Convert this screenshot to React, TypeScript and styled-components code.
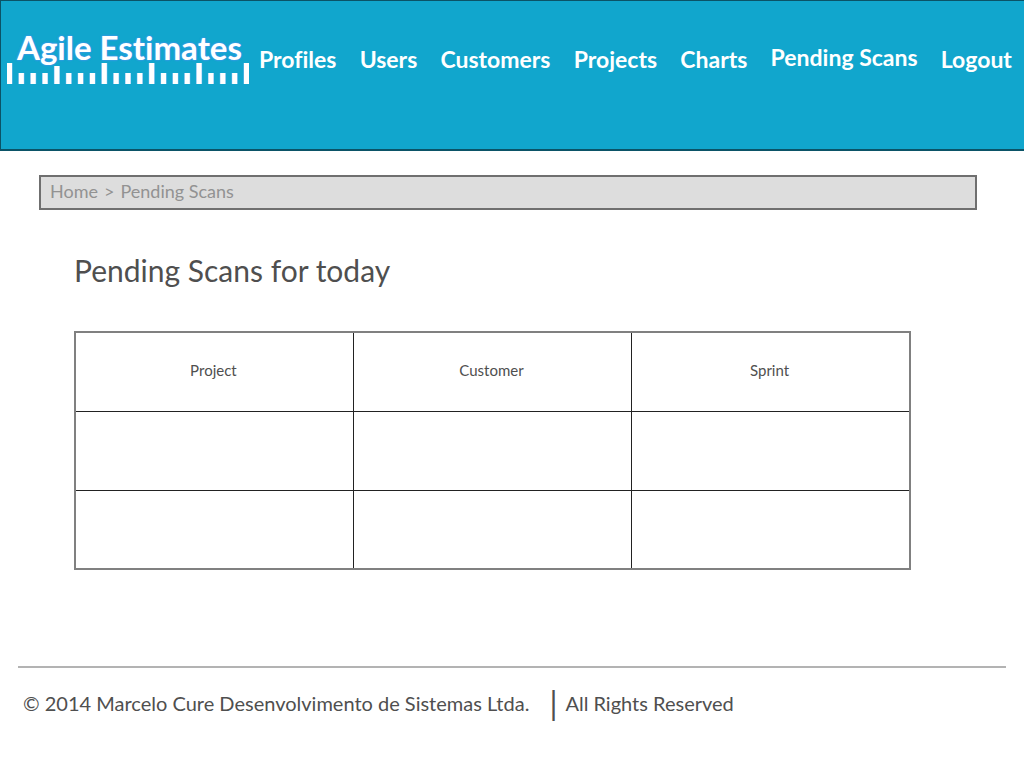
import React from "react";
import styled, { createGlobalStyle } from "styled-components";

const GlobalStyle = createGlobalStyle`
  * { box-sizing: border-box; }
  body {
    margin: 0;
    background: #ffffff;
    color: #4f4f4f;
    font-family: Lato, "Liberation Sans", sans-serif;
    font-variant-ligatures: none;
  }
`;

const Header = styled.header`
  display: flex;
  align-items: flex-start;
  gap: 10px;
  min-height: 151px;
  padding: 28px 12px 0 6px;
  background: #11a6cd;
  border: solid #0b5367;
  border-width: 1px 0 2px 1px;
`;

const Logo = styled.a`
  flex: none;
  display: flex;
  flex-direction: column;
  width: 242px;
  color: #ffffff;
  text-decoration: none;
`;

const Wordmark = styled.span`
  padding: 2px 0 0 10px;
  font-size: 33px;
  font-weight: 700;
  line-height: 32px;
  white-space: nowrap;
  text-shadow: 0 0 2px #4a94f0, 0 0 2px #4a94f0;
`;

const Nav = styled.nav`
  flex: 1;
  display: flex;
  justify-content: space-between;
  padding-top: 15px;
`;

const NavLink = styled.a<{ $current?: boolean }>`
  margin-top: ${(p) => (p.$current ? "-2px" : "0")};
  color: #ffffff;
  font-size: 23px;
  font-weight: 700;
  line-height: 30px;
  text-decoration: none;
  white-space: nowrap;
`;

const Breadcrumb = styled.nav`
  display: flex;
  gap: 6px;
  margin: 24px 47px 0 39px;
  padding: 0 9px 2px;
  border: 2px solid #6f6f6f;
  background: #dddddd;
  color: #929292;
  font-size: 18px;
  line-height: 29px;
`;

const Crumb = styled.a`
  color: inherit;
  text-decoration: none;
`;

const Main = styled.main`
  padding: 40px 113px 0 74px;
`;

const Title = styled.h1`
  margin: 0 0 41px;
  font-size: 30px;
  font-weight: 400;
  line-height: 40px;
`;

const ScanTable = styled.table`
  width: 100%;
  table-layout: fixed;
  border-collapse: collapse;
  border: 2px solid #808080;
`;

const cell = `
  height: 79px;
  padding: 0 2px 4px 0;
  border: 1px solid #222222;
`;

const HeadCell = styled.th`
  ${cell}
  font-size: 15px;
  font-weight: 400;
`;

const Cell = styled.td`
  ${cell}
`;

const Footer = styled.footer`
  margin: 96px 18px 0;
  padding: 17px 5px 24px;
  border-top: 2px solid #b3b3b3;
  font-size: 20px;
  line-height: 36px;
`;

const FooterText = styled.p`
  display: flex;
  align-items: center;
  gap: 8px;
  margin: 0;
`;

const Bar = styled.span`
  padding-left: 12px;
  font-size: 32px;
`;

const links = ["Profiles", "Users", "Customers", "Projects", "Charts", "Pending Scans", "Logout"];
const columns = ["Project", "Customer", "Sprint"];
const rows = [0, 1];

function tickHeight(i: number) {
  if (i === 4) return 18;
  return i % 4 === 0 ? 21 : 11;
}

function Ruler() {
  return (
    <svg width="242" height="21" viewBox="0 0 242 21" aria-hidden="true">
      {Array.from({ length: 21 }, (_, i) => {
        const h = tickHeight(i);
        return (
          <g key={i}>
            <rect x={i * 11.85 - 0.5} y={21 - h} width="6" height={h} fill="#7dbcf0" />
            <rect x={i * 11.85} y={21 - h} width="5" height={h} fill="#fff" />
          </g>
        );
      })}
    </svg>
  );
}

export default function App() {
  return (
    <>
      <GlobalStyle />
      <Header>
        <Logo href="#home">
          <Wordmark>Agile Estimates</Wordmark>
          <Ruler />
        </Logo>
        <Nav aria-label="Main">
          {links.map((l) => (
            <NavLink key={l} href="#" $current={l === "Pending Scans"}>
              {l}
            </NavLink>
          ))}
        </Nav>
      </Header>
      <Breadcrumb aria-label="Breadcrumb">
        <Crumb href="#home">Home</Crumb>
        <span>&gt;</span>
        <span>Pending Scans</span>
      </Breadcrumb>
      <Main>
        <Title>Pending Scans for today</Title>
        <ScanTable>
          <thead>
            <tr>
              {columns.map((c) => (
                <HeadCell key={c} scope="col">{c}</HeadCell>
              ))}
            </tr>
          </thead>
          <tbody>
            {rows.map((r) => (
              <tr key={r}>
                {columns.map((c) => (
                  <Cell key={c} />
                ))}
              </tr>
            ))}
          </tbody>
        </ScanTable>
      </Main>
      <Footer>
        <FooterText>
          <span>© 2014 Marcelo Cure Desenvolvimento de Sistemas Ltda.</span>
          <Bar>|</Bar>
          <span>All Rights Reserved</span>
        </FooterText>
      </Footer>
    </>
  );
}
